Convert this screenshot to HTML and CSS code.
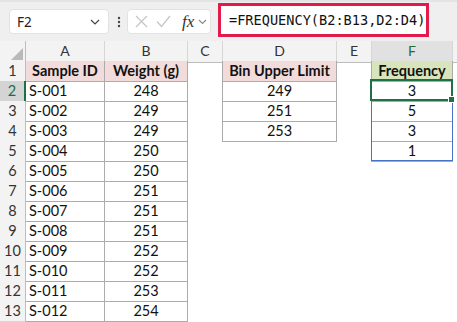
FILE: index.html
```html
<!DOCTYPE html>
<html lang="en">
<head>
    <meta charset="UTF-8">
    <meta name="viewport" content="width=device-width, initial-scale=1.0">
    <title>FREQUENCY</title>
    <link rel="stylesheet" href="styles.css">
</head>
<body>
    <div class="formula-bar">
        <div class="name-box">
            <span>F2</span>
            <svg class="chev" width="10" height="6" viewBox="0 0 10 6"><path d="M1 1 L5 5 L9 1" fill="none" stroke="#444" stroke-width="1.2"/></svg>
        </div>
        <svg class="dots" width="4" height="12" viewBox="0 0 4 12"><circle cx="2" cy="2" r="1.2" fill="#444"/><circle cx="2" cy="6" r="1.2" fill="#444"/><circle cx="2" cy="10" r="1.2" fill="#444"/></svg>
        <div class="fx-box">
            <svg width="13" height="13" viewBox="0 0 13 13"><path d="M1 1 L12 12 M12 1 L1 12" stroke="#c4c4c4" stroke-width="1.2"/></svg>
            <svg width="15" height="13" viewBox="0 0 15 13"><path d="M1 6.5 L5.5 11.5 L14 1" fill="none" stroke="#c4c4c4" stroke-width="1.2"/></svg>
            <span class="fx">fx</span>
            <svg width="9" height="6" viewBox="0 0 9 6"><path d="M1 1 L4.5 4.5 L8 1" fill="none" stroke="#888" stroke-width="1.1"/></svg>
        </div>
        <div class="formula">=FREQUENCY(B2:B13,D2:D4)</div>
    </div>

    <div class="sheet">
        <div class="row head">
            <div class="corner"><svg width="12" height="12" viewBox="0 0 12 12"><path d="M12 0 L12 12 L0 12 Z" fill="#b9b9b9"/></svg></div>
            <div class="col">A</div>
            <div class="col">B</div>
            <div class="col">C</div>
            <div class="col">D</div>
            <div class="col">E</div>
            <div class="col sel">F</div>
            <div class="col last"></div>
        </div>
        <div class="row">
            <div class="num">1</div>
            <div class="cell b th">Sample ID</div>
            <div class="cell b th">Weight (g)</div>
            <div class="cell edge"></div>
            <div class="cell b th">Bin Upper Limit</div>
            <div class="cell edge"></div>
            <div class="cell b th green">Frequency</div>
            <div class="cell"></div>
        </div>
        <div class="row">
            <div class="num sel">2</div>
            <div class="cell b left">S-001</div>
            <div class="cell b">248</div>
            <div class="cell edge"></div>
            <div class="cell b">249</div>
            <div class="cell edge"></div>
            <div class="cell b">3</div>
            <div class="cell"></div>
        </div>
        <div class="row">
            <div class="num">3</div>
            <div class="cell b left">S-002</div>
            <div class="cell b">249</div>
            <div class="cell edge"></div>
            <div class="cell b">251</div>
            <div class="cell edge"></div>
            <div class="cell b">5</div>
            <div class="cell"></div>
        </div>
        <div class="row">
            <div class="num">4</div>
            <div class="cell b left">S-003</div>
            <div class="cell b">249</div>
            <div class="cell edge"></div>
            <div class="cell b">253</div>
            <div class="cell edge"></div>
            <div class="cell b">3</div>
            <div class="cell"></div>
        </div>
        <div class="row">
            <div class="num">5</div>
            <div class="cell b left">S-004</div>
            <div class="cell b">250</div>
            <div class="cell"></div>
            <div class="cell"></div>
            <div class="cell edge"></div>
            <div class="cell b">1</div>
            <div class="cell"></div>
        </div>
        <div class="row">
            <div class="num">6</div>
            <div class="cell b left">S-005</div>
            <div class="cell b">250</div>
            <div class="cell"></div><div class="cell"></div><div class="cell"></div><div class="cell"></div><div class="cell"></div>
        </div>
        <div class="row">
            <div class="num">7</div>
            <div class="cell b left">S-006</div>
            <div class="cell b">251</div>
            <div class="cell"></div><div class="cell"></div><div class="cell"></div><div class="cell"></div><div class="cell"></div>
        </div>
        <div class="row">
            <div class="num">8</div>
            <div class="cell b left">S-007</div>
            <div class="cell b">251</div>
            <div class="cell"></div><div class="cell"></div><div class="cell"></div><div class="cell"></div><div class="cell"></div>
        </div>
        <div class="row">
            <div class="num">9</div>
            <div class="cell b left">S-008</div>
            <div class="cell b">251</div>
            <div class="cell"></div><div class="cell"></div><div class="cell"></div><div class="cell"></div><div class="cell"></div>
        </div>
        <div class="row">
            <div class="num">10</div>
            <div class="cell b left">S-009</div>
            <div class="cell b">252</div>
            <div class="cell"></div><div class="cell"></div><div class="cell"></div><div class="cell"></div><div class="cell"></div>
        </div>
        <div class="row">
            <div class="num">11</div>
            <div class="cell b left">S-010</div>
            <div class="cell b">252</div>
            <div class="cell"></div><div class="cell"></div><div class="cell"></div><div class="cell"></div><div class="cell"></div>
        </div>
        <div class="row">
            <div class="num">12</div>
            <div class="cell b left">S-011</div>
            <div class="cell b">253</div>
            <div class="cell"></div><div class="cell"></div><div class="cell"></div><div class="cell"></div><div class="cell"></div>
        </div>
        <div class="row">
            <div class="num">13</div>
            <div class="cell b left">S-012</div>
            <div class="cell b">254</div>
            <div class="cell"></div><div class="cell"></div><div class="cell"></div><div class="cell"></div><div class="cell"></div>
        </div>
        <div class="row tail">
            <div class="num"></div>
            <div class="cell"></div><div class="cell"></div><div class="cell"></div><div class="cell"></div><div class="cell"></div><div class="cell"></div><div class="cell"></div>
        </div>

        <div class="spill"></div>
        <div class="active"><span class="handle"></span></div>
    </div>
</body>
</html>
```

FILE: styles.css
```css
body {
    margin: 0;
    background-color: white;
    font-family: Lato, "Noto Sans", sans-serif;
    color: #111;
    overflow: hidden;
    height: 322px;
}

.formula-bar {
    display: flex;
    align-items: center;
    height: 41px;
    padding-left: 9px;
    background-color: #efefef;
    border-top: 2px solid #e4e4e4;
    box-sizing: border-box;
}

.name-box {
    display: flex;
    align-items: center;
    justify-content: space-between;
    width: 100px;
    height: 25px;
    padding: 0 8px 0 7px;
    box-sizing: border-box;
    background-color: white;
    border: 1px solid #e2e2e2;
    border-radius: 4px;
    font-family: "Noto Sans", sans-serif;
    font-size: 13.5px;
    color: #222;
}

.dots {
    margin: 0 5px 0 8px;
}

.fx-box {
    display: flex;
    align-items: center;
    gap: 8px;
    width: 84px;
    height: 25px;
    padding-left: 7px;
    margin-left: 1px;
    box-sizing: border-box;
    background-color: white;
    border: 1px solid #e2e2e2;
    border-radius: 4px;
}

.fx {
    font-family: "Liberation Serif", serif;
    font-style: italic;
    font-size: 17px;
    color: #333;
    margin-left: 3px;
    margin-right: -4px;
}

.formula {
    width: 211px;
    height: 34px;
    margin-left: 7px;
    margin-top: -4px;
    padding-left: 8px;
    box-sizing: border-box;
    background-color: white;
    border: 3px solid #e31b4b;
    font-family: "DejaVu Sans Mono", monospace;
    font-size: 13.6px;
    line-height: 28px;
    color: #111;
    white-space: nowrap;
}

.sheet {
    position: relative;
}

.row {
    display: grid;
    grid-template-columns: 26px 79px 83px 35px 114px 35px 81px 1fr;
    height: 20px;
}

.row.tail {
    height: 1px;
}

.row > div {
    box-sizing: border-box;
    font-size: 14.5px;
    line-height: 20px;
    text-align: center;
    white-space: nowrap;
}

.head > div {
    background-color: #f3f3f3;
    border-right: 1px solid #d6d6d6;
    border-bottom: 1px solid #bdbdbd;
    color: #333;
    font-size: 14px;
}

.head .corner {
    display: flex;
    align-items: flex-end;
    justify-content: flex-end;
    padding: 0 2px 2px 0;
    border-right: 1px solid #bdbdbd;
}

.head .sel {
    background-color: #e1e1e1;
    color: #1e6b41;
    border-bottom: 2px solid #1e7145;
}

.head .last {
    border-right: none;
}

.num {
    background-color: #f3f3f3;
    border-right: 1px solid #bdbdbd;
    border-bottom: 1px solid #d6d6d6;
    color: #333;
    font-size: 14px;
}

.num.sel {
    background-color: #d4d4d4;
    color: #1e6b41;
    border-right: 2px solid #1e7145;
}

.b {
    border-right: 1px solid #ababab;
    border-bottom: 1px solid #ababab;
}

.edge {
    border-right: 1px solid #ababab;
}

.th {
    background-color: #f2dcdb;
    font-weight: bold;
}

.th.green {
    background-color: #d8e4bc;
}

.row > .left {
    text-align: left;
    padding-left: 3px;
}

.spill {
    position: absolute;
    left: 371px;
    top: 39px;
    width: 82px;
    height: 81px;
    box-sizing: border-box;
    border: 1px solid #4472c4;
}

.active {
    position: absolute;
    left: 370px;
    top: 38px;
    width: 83px;
    height: 22px;
    box-sizing: border-box;
    border: 2px solid #1e7145;
}

.handle {
    position: absolute;
    right: -4px;
    bottom: -4px;
    width: 5px;
    height: 5px;
    background-color: #1e7145;
    border: 1px solid white;
}
```
